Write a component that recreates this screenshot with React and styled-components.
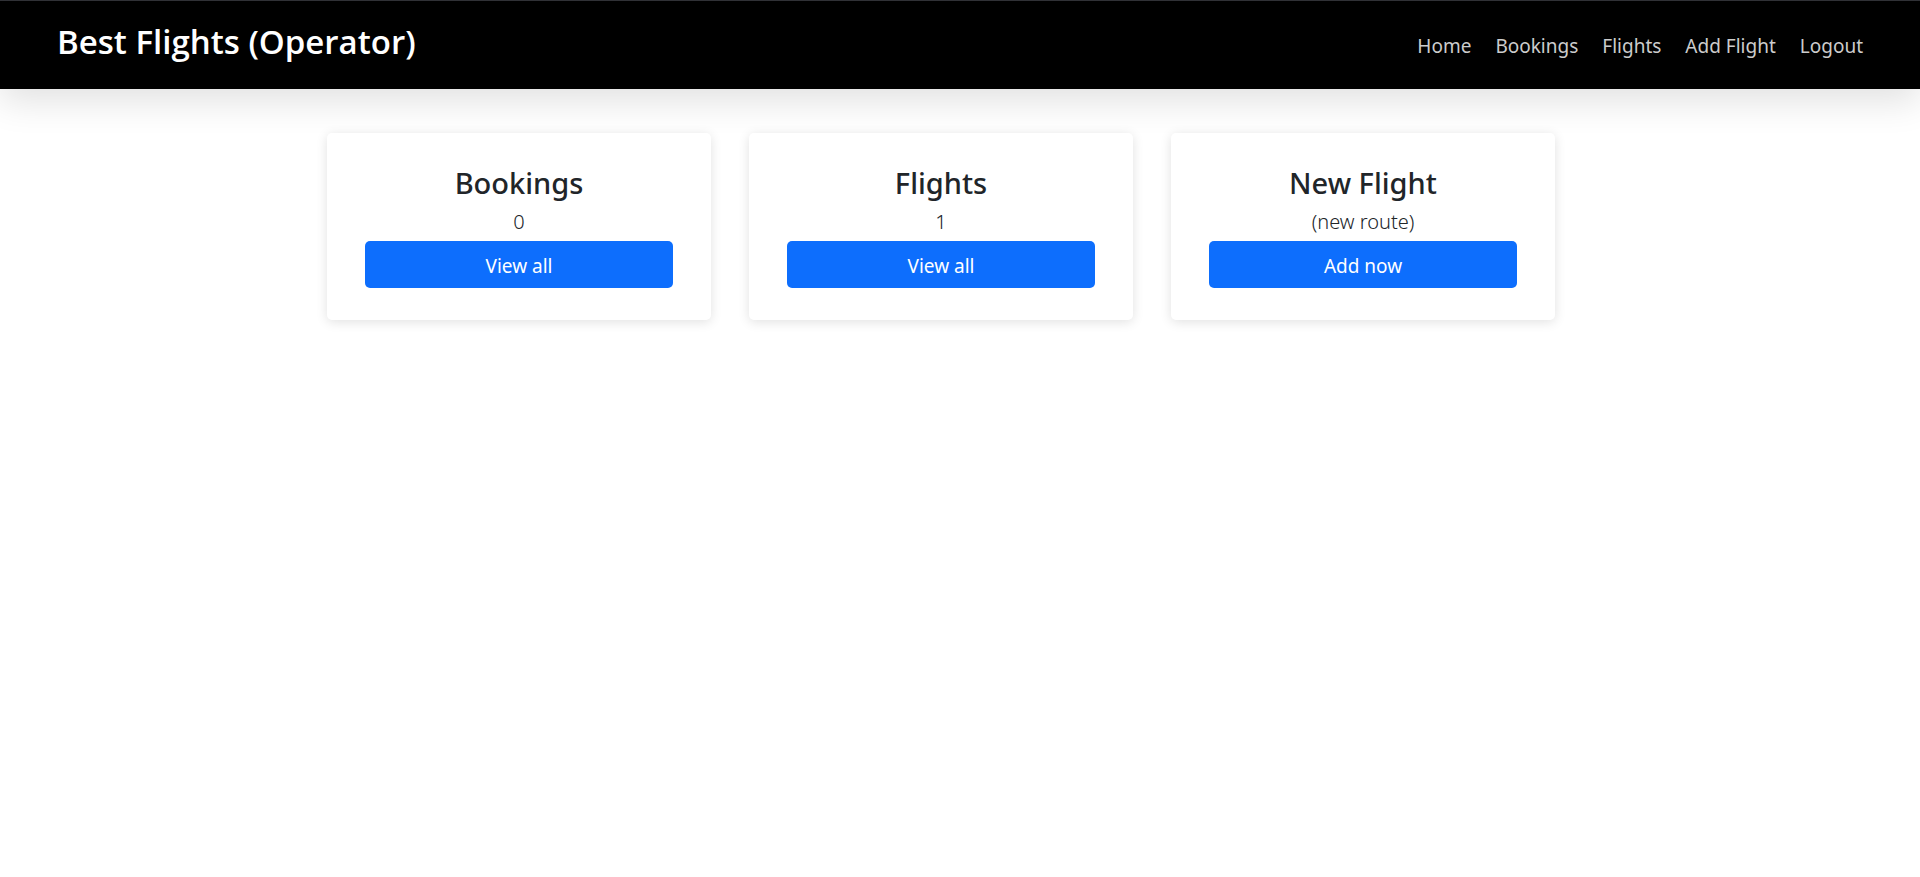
import React from "react";
import styled, { createGlobalStyle } from "styled-components";

const GlobalStyle = createGlobalStyle`
  *, *::before, *::after { box-sizing: border-box; }
  body {
    margin: 0;
    background: #fff;
    color: #212529;
    font-family: "Segoe UI", "Noto Sans", "Open Sans", sans-serif;
    font-size: 19px;
    line-height: 30px;
  }
`;

const Header = styled.header`
  display: flex;
  flex-wrap: wrap;
  align-items: center;
  justify-content: space-between;
  gap: 0 24px;
  padding: 17px 57px 15px;
  border-top: 1px solid #303136;
  background: #000;
  box-shadow: 0 12px 36px rgba(0, 0, 0, 0.12);
`;

const Brand = styled.h1`
  margin: 0;
  padding-bottom: 8px;
  color: #fff;
  font-family: "Segoe UI", "Open Sans", "Noto Sans", sans-serif;
  font-size: 33px;
  font-weight: 600;
  line-height: 48px;
`;

const Nav = styled.nav`
  display: flex;
  flex-wrap: wrap;
  gap: 0 24px;
`;

const NavLink = styled.a`
  color: #ccc;
  text-decoration: none;

  &:hover { color: #fff; }
`;

const Main = styled.main`
  display: flex;
  flex-wrap: wrap;
  justify-content: center;
  padding: 44px 0;
`;

const Card = styled.section`
  width: 20%;
  min-width: 260px;
  margin-right: 38px;
  padding: 32px 38px;
  border-radius: 5px;
  background: #fff;
  box-shadow: 0 2px 12px rgba(0, 0, 0, 0.12);
  text-align: center;
`;

const CardTitle = styled.h2`
  margin: 0 0 6px;
  font-size: 29px;
  font-weight: 500;
  line-height: 36px;
`;

const CardText = styled.p`
  margin: 0 0 4px;
  font-size: 20px;
  font-weight: 300;
`;

const CardButton = styled.button`
  display: block;
  width: 100%;
  padding: 10px 16px 6px;
  border: 0;
  border-radius: 5px;
  background: #0d6efd;
  color: #fff;
  font: inherit;
  line-height: 31px;
  cursor: pointer;

  &:hover { background: #0b5ed7; }
`;

const links = ["Home", "Bookings", "Flights", "Add Flight", "Logout"];

const cards = [
  { title: "Bookings", text: "0", action: "View all" },
  { title: "Flights", text: "1", action: "View all" },
  { title: "New Flight", text: "(new route)", action: "Add now" },
];

export default function App() {
  return (
    <>
      <GlobalStyle />
      <Header>
        <Brand>Best Flights (Operator)</Brand>
        <Nav>
          {links.map((label) => (
            <NavLink key={label} href="#">{label}</NavLink>
          ))}
        </Nav>
      </Header>
      <Main>
        {cards.map(({ title, text, action }) => (
          <Card key={title}>
            <CardTitle>{title}</CardTitle>
            <CardText>{text}</CardText>
            <CardButton type="button">{action}</CardButton>
          </Card>
        ))}
      </Main>
    </>
  );
}
